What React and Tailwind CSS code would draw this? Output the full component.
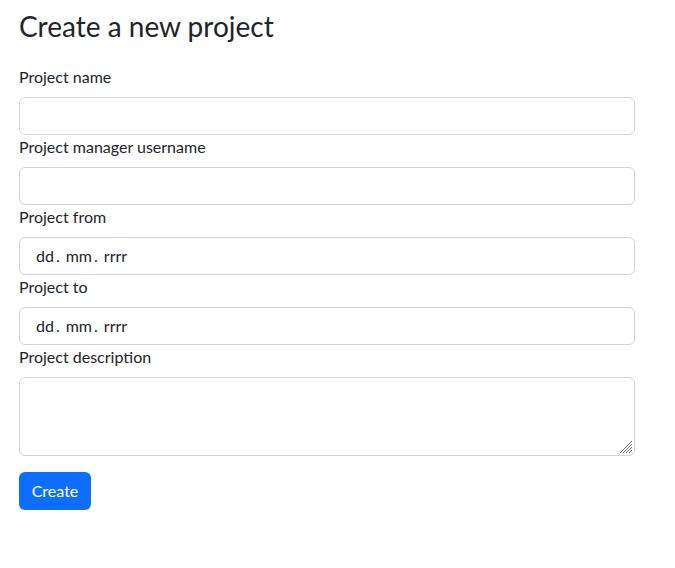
export default function App() {
  const input =
    'block w-full h-[38px] rounded-[6px] border border-[#ced4da] bg-white px-3 text-base text-[#212529] outline-none'
  const label = 'block mb-2 leading-6 text-base text-[#212529]'

  const DateField = () => (
    <div className={input + ' flex items-center pl-4 gap-[6px]'}>
      <span>dd<span className="ml-[2px]">.</span></span>
      <span>mm<span className="ml-[2px]">.</span></span>
      <span>rrrr</span>
    </div>
  )

  return (
    <div
      className="min-h-screen bg-white px-[19px] pt-[10px] text-[#212529]"
      style={{ fontFamily: '"Segoe UI", Lato, sans-serif' }}
    >
      <h2 className="text-[28px] leading-[33px] font-normal mb-[22px]">Create a new project</h2>
      <form className="w-[616px]" onSubmit={(e) => e.preventDefault()}>
        <label className={label}>Project name</label>
        <input type="text" className={input} />

        <label className={label}>Project manager username</label>
        <input type="text" className={input} />

        <label className={label}>Project from</label>
        <DateField />

        <label className={label}>Project to</label>
        <DateField />

        <label className={label}>Project description</label>
        <div className="relative">
          <textarea className="block w-full h-[79px] rounded-[6px] border border-[#ced4da] bg-white px-3 py-1.5 text-base outline-none resize-none" />
          <svg className="absolute right-[2px] bottom-[2px] pointer-events-none" width="14" height="14" viewBox="0 0 14 14">
            <g stroke="#6b6b6b" strokeWidth="1">
              <line x1="13" y1="1" x2="1" y2="13" />
              <line x1="13" y1="4" x2="4" y2="13" />
              <line x1="13" y1="7" x2="7" y2="13" />
              <line x1="13" y1="10" x2="10" y2="13" />
            </g>
          </svg>
        </div>

        <button
          type="submit"
          className="mt-4 h-[38px] w-[72px] rounded-[6px] bg-[#0d6efd] text-base text-white"
        >
          Create
        </button>
      </form>
    </div>
  )
}
